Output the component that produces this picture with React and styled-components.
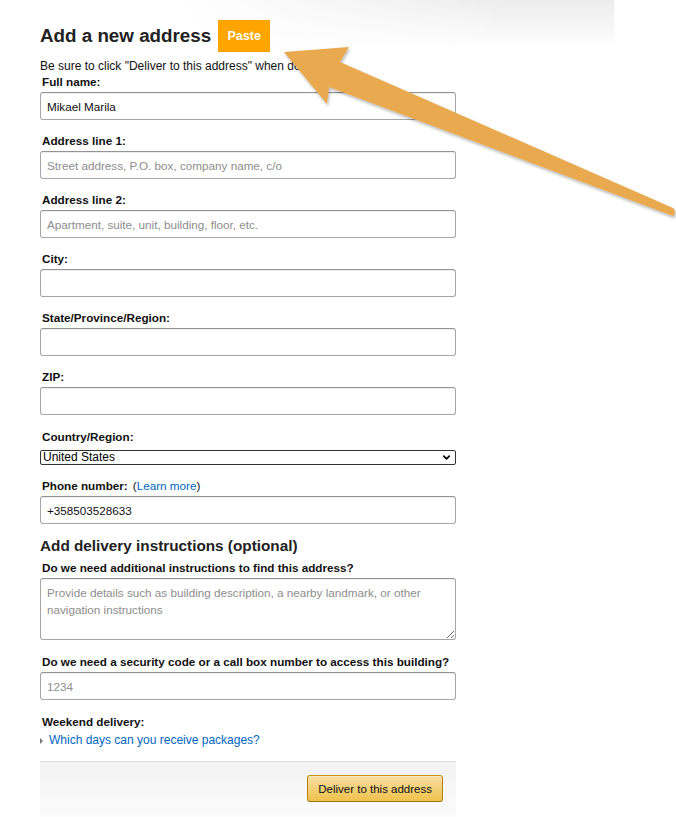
import React from 'react'
import styled, { createGlobalStyle } from 'styled-components'
import { ChevronDown } from 'lucide-react'

const GlobalStyle = createGlobalStyle`
  body {
    margin: 0;
    background: #fff;
    font-family: "Liberation Sans", Arial, sans-serif;
    color: #111;
  }
`;

const Page = styled.div`
  position: relative;
  width: 676px;
  height: 817px;
  overflow: hidden;
  background: #fff;
`;

const TopShade = styled.div`
  position: absolute;
  top: 0;
  left: 180px;
  width: 434px;
  height: 48px;
  background: linear-gradient(to bottom, rgba(0,0,0,.075), rgba(0,0,0,0));
  -webkit-mask-image: linear-gradient(to right, transparent, #000 75%);
  mask-image: linear-gradient(to right, transparent, #000 75%);
`;

const Form = styled.div`
  position: relative;
  width: 416px;
  margin-left: 40px;
  padding-top: 20px;
`;

const TitleRow = styled.div`
  display: flex;
  align-items: center;
  gap: 7px;
  height: 32px;
`;

const Title = styled.h1`
  margin: 0;
  font-size: 18.8px;
  font-weight: 700;
  color: #222;
`;

const PasteButton = styled.button`
  height: 32px;
  width: 52px;
  border: 0;
  background: #ffa500;
  color: #fff;
  font-family: inherit;
  font-size: 12.5px;
  font-weight: 700;
  padding: 0;
`;

const Hint = styled.p`
  margin: 8px 0 2px;
  font-size: 12px;
  line-height: 13px;
  color: #111;
`;

const Field = styled.div`
  margin-bottom: ${p => p.$gap ?? 14}px;
`;

const Label = styled.label`
  display: block;
  padding-left: 2px;
  margin-bottom: ${p => p.$space ?? 3}px;
  font-size: 11.7px;
  line-height: 14px;
  font-weight: 700;
  color: #111;
`;

const Input = styled.input`
  display: block;
  box-sizing: border-box;
  width: 100%;
  height: 28px;
  margin: 0;
  padding: 0 6px;
  border: 1px solid #a6a6a6;
  border-top-color: #949494;
  border-radius: 3px;
  box-shadow: 0 1px 0 rgba(255,255,255,.5), inset 0 1px 0 rgba(0,0,0,.07);
  font-family: "Liberation Sans", Arial, sans-serif;
  font-size: 11.7px;
  color: #111;
  outline: none;
  &::placeholder { color: #8d8d8d; }
`;

const TextArea = styled.textarea`
  display: block;
  box-sizing: border-box;
  width: 100%;
  height: 62px;
  margin: 0;
  padding: 5px 6px;
  border: 1px solid #a6a6a6;
  border-top-color: #949494;
  border-radius: 3px;
  box-shadow: inset 0 1px 0 rgba(0,0,0,.07);
  font-family: "Liberation Sans", Arial, sans-serif;
  font-size: 11.7px;
  line-height: 17px;
  outline: none;
  &::placeholder { color: #8d8d8d; }
`;

const SelectWrap = styled.div`
  position: relative;
  height: 15px;
`;

const Select = styled.select`
  display: block;
  box-sizing: border-box;
  width: 100%;
  height: 15px;
  margin: 0;
  padding: 0 0 0 2px;
  appearance: none;
  border: 1px solid #333;
  border-radius: 2px;
  background: #fff;
  font-family: "Liberation Sans", Arial, sans-serif;
  font-size: 12px;
  line-height: 13px;
  color: #000;
`;

const Caret = styled(ChevronDown)`
  position: absolute;
  right: 4px;
  top: 2px;
  pointer-events: none;
`;

const SubTitle = styled.h2`
  margin: 0 0 6px;
  font-size: 15.3px;
  line-height: 18px;
  font-weight: 700;
  color: #222;
`;

const Link = styled.a`
  color: #0066c0;
  text-decoration: none;
`;

const Paren = styled.span`
  font-weight: 400;
  margin-left: 5px;
`;

const Expander = styled.div`
  display: flex;
  align-items: center;
  gap: 6px;
  font-size: 12px;
  line-height: 15px;
  margin-top: 4px;
`;

const Tri = styled.span`
  width: 0;
  height: 0;
  border-left: 3px solid #777;
  border-top: 3px solid transparent;
  border-bottom: 3px solid transparent;
`;

const Footer = styled.div`
  margin-top: 13px;
  height: 60px;
  border-top: 1px solid #ddd;
  background: linear-gradient(to bottom, #f2f2f2, #fcfcfc);
  display: flex;
  justify-content: flex-end;
  align-items: flex-start;
  padding: 13px 13px 0 0;
  box-sizing: border-box;
`;

const DeliverButton = styled.button`
  height: 27px;
  padding: 0 10px;
  border: 1px solid;
  border-color: #c89411 #b0820f #99710d;
  border-radius: 3px;
  background: linear-gradient(to bottom, #f7dfa5, #f0c14b);
  box-shadow: inset 0 1px 0 rgba(255,255,255,.4);
  font-family: "Liberation Sans", Arial, sans-serif;
  font-size: 11.5px;
  color: #111;
`;

const ArrowLayer = styled.svg`
  position: absolute;
  top: 0;
  left: 0;
  pointer-events: none;
`;

const fields = [
  { label: 'Full name:', value: 'Mikael Marila' },
  { label: 'Address line 1:', placeholder: 'Street address, P.O. box, company name, c/o' },
  { label: 'Address line 2:', placeholder: 'Apartment, suite, unit, building, floor, etc.' },
  { label: 'City:' },
  { label: 'State/Province/Region:' },
  { label: 'ZIP:' },
];

export default function App() {
  return (
    <Page>
      <GlobalStyle />
      <TopShade />
      <Form>
        <TitleRow>
          <Title>Add a new address</Title>
          <PasteButton>Paste</PasteButton>
        </TitleRow>
        <Hint>Be sure to click "Deliver to this address" when done.</Hint>
        {fields.map((f, i) => (
          <Field key={f.label} $gap={i === fields.length - 1 ? 15 : 14}>
            <Label>{f.label}</Label>
            <Input defaultValue={f.value} placeholder={f.placeholder} />
          </Field>
        ))}
        <Field $gap={14}>
          <Label $space={6}>Country/Region:</Label>
          <SelectWrap>
            <Select defaultValue="US">
              <option value="US">United States</option>
            </Select>
            <Caret size={11} strokeWidth={3.5} color="#000" />
          </SelectWrap>
        </Field>
        <Field $gap={13}>
          <Label>
            Phone number:<Paren>(<Link href="#">Learn more</Link>)</Paren>
          </Label>
          <Input defaultValue="+358503528633" />
        </Field>
        <SubTitle>Add delivery instructions (optional)</SubTitle>
        <Field $gap={15}>
          <Label>Do we need additional instructions to find this address?</Label>
          <TextArea placeholder="Provide details such as building description, a nearby landmark, or other navigation instructions" />
        </Field>
        <Field $gap={15}>
          <Label>Do we need a security code or a call box number to access this building?</Label>
          <Input placeholder="1234" />
        </Field>
        <Field $gap={0}>
          <Label $space={0}>Weekend delivery:</Label>
          <Expander>
            <Tri />
            <Link href="#">Which days can you receive packages?</Link>
          </Expander>
        </Field>
        <Footer>
          <DeliverButton>Deliver to this address</DeliverButton>
        </Footer>
      </Form>
      <ArrowLayer width="676" height="817" viewBox="0 0 676 817">
        <defs>
          <filter id="sh" x="-10%" y="-10%" width="120%" height="130%">
            <feDropShadow dx="1" dy="2" stdDeviation="1.5" floodColor="#000" floodOpacity="0.3" />
          </filter>
        </defs>
        <path
          d="M284 52 L349 47 L340 62 L673 208 Q677 212 673 216 L329 87 L327 104 Z"
          fill="#e9aa4f"
          filter="url(#sh)"
        />
      </ArrowLayer>
    </Page>
  )
}
